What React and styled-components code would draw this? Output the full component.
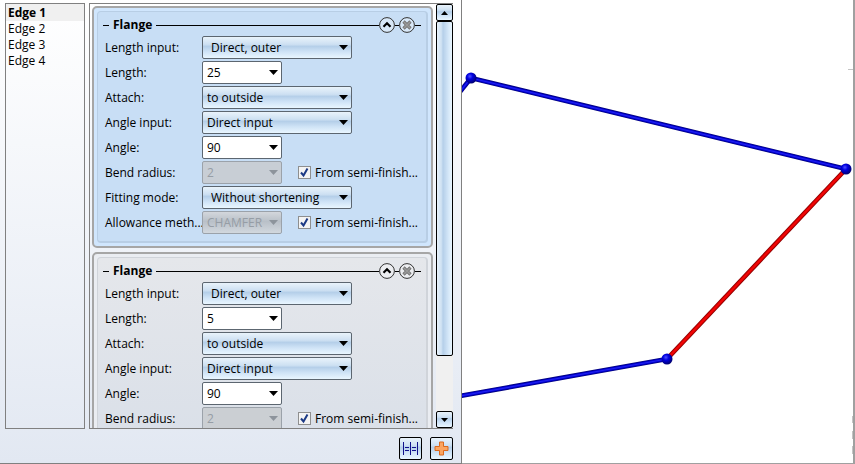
import React, { useId, useState } from "react";
import styled, { createGlobalStyle, css } from "styled-components";

const GlobalStyle = createGlobalStyle`
  * {
    box-sizing: border-box;
  }
  body {
    margin: 0;
    background: #fff;
    color: #000;
    overflow: hidden;
  }
  body, button, input, select {
    font-family: "Open Sans", "Noto Sans", sans-serif;
    font-size: 12px;
    line-height: 16px;
  }
`;

const Window = styled.div`
  display: flex;
  height: 100vh;
`;

const Sidebar = styled.aside`
  flex: 0 0 462px;
  display: flex;
  flex-direction: column;
  padding: 3px 8px 3px 5px;
  border-right: 1px solid #808080;
  border-bottom: 1px solid #808080;
  background: linear-gradient(#fff, #e2e8f2);
`;

const Columns = styled.div`
  flex: 1;
  min-height: 0;
  display: flex;
  gap: 4px;
`;

const EdgeList = styled.ul`
  width: 80px;
  margin: 0;
  padding: 0;
  list-style: none;
  border: 1px solid #808080;
`;

const EdgeButton = styled.button`
  display: block;
  width: 100%;
  padding: 0 2px;
  border: none;
  text-align: left;
  color: #000;
  background: ${({ $active }) => ($active ? "#f0f0f0" : "transparent")};
  font-weight: ${({ $active }) => ($active ? 700 : 400)};

  li:first-child & {
    padding-top: 1px;
  }
`;

const Scroller = styled.div`
  flex: 1;
  min-width: 0;
  display: flex;
  justify-content: space-between;
  border: 1px solid #808080;
  border-right: none;
`;

const Cards = styled.div`
  width: 343px;
  padding: 2px 0 0 2px;
  overflow: hidden;
  display: flex;
  flex-direction: column;
  gap: 4px;
`;

const Card = styled.section`
  flex: none;
  padding: 3px;
  border: 2px solid #a6a6a6;
  border-radius: 5px;
  background: ${({ $selected }) => ($selected ? "#d0e6fd" : "#eaedf2")};
`;

const CardBody = styled.div`
  padding: 4px 5px 6px;
  border: 1px solid ${({ $selected }) => ($selected ? "#b8cee5" : "#d0d4da")};
  border-right-width: 2px;
  border-bottom-width: 2px;
  border-radius: 4px;
  background: ${({ $selected }) =>
    $selected ? "#c8def5" : "linear-gradient(#e5e7eb, #d7dee8)"};
`;

const CardHeader = styled.header`
  display: flex;
  align-items: center;
  height: 18px;
  margin-bottom: 1px;
`;

const Rule = styled.span`
  height: 1px;
  background: #000;
  flex: ${({ $width }) => ($width ? `0 0 ${$width}px` : 1)};
`;

const Title = styled.h2`
  margin: 0 4px;
  font-size: 12px;
  line-height: 16px;
`;

const RoundButton = styled.button`
  width: 16px;
  height: 16px;
  padding: 0;
  display: flex;
  border: none;
  background: transparent;
`;

const Row = styled.div`
  display: flex;
  align-items: center;
  height: 25px;
  padding-left: 2px;
`;

const Label = styled.label`
  width: 97px;
  white-space: nowrap;
`;

const glass = css`
  background: linear-gradient(#e9f3fb, #cde0f2 35%, #b5cfe9 45%, #cfe3f6 70%, #e9f6ff);
`;

const SelectBox = styled.span`
  position: relative;
  display: block;
  width: ${({ $wide }) => ($wide ? 150 : 80)}px;
  height: 23px;
`;

const Select = styled.select`
  appearance: none;
  display: block;
  width: 100%;
  height: 100%;
  padding: 0 16px 0 ${({ $inset }) => ($inset ? 8 : 4)}px;
  border: 1px solid #5c6670;
  border-radius: 2px;
  color: #000;
  ${({ $plain }) => ($plain ? "background: #fff;" : glass)}

  &:disabled {
    opacity: 1;
    color: #969da5;
    border-color: #9ba2aa;
    background: ${({ $plain }) =>
      $plain
        ? "rgba(200, 203, 207, 0.85)"
        : "linear-gradient(#d3d7dc, #b9c0c8 45%, #d2d8de)"};
  }
`;

const Arrow = styled.svg`
  position: absolute;
  right: 4px;
  top: 9px;
  pointer-events: none;
  fill: ${({ $muted }) => ($muted ? "#8d949c" : "#000")};
`;

const CheckLabel = styled.label`
  display: flex;
  align-items: center;
  gap: 4px;
  margin-left: 16px;
  white-space: nowrap;
`;

const Checkbox = styled.input`
  appearance: none;
  width: 13px;
  height: 13px;
  margin: 0;
  border: 1px solid #8e8f8f;
  background: #f4f4f4;

  &:checked {
    background: #f4f4f4
      url("data:image/svg+xml,%3Csvg xmlns='http://www.w3.org/2000/svg' viewBox='0 0 11 11'%3E%3Cpath d='M2 5.5 4.5 8.5 8.5 1.5' fill='none' stroke='%231c3a85' stroke-width='2'/%3E%3C/svg%3E");
  }
`;

const Scrollbar = styled.div`
  width: 17px;
  display: flex;
  flex-direction: column;
  background: #f0f0f0;
`;

const ScrollButton = styled.button`
  height: 17px;
  padding: 0;
  display: grid;
  place-items: center;
  border: 1px solid #000;
  border-radius: 2px;
  ${glass}
`;

const Track = styled.div`
  flex: 1;
`;

const Thumb = styled.div`
  height: 86%;
  border: 1px solid #000;
  border-radius: 2px;
  background: linear-gradient(90deg, #e9f3fb, #cde0f2 30%, #b5cfe9 40%, #cfe3f6 70%, #e9f6ff);
`;

const Footer = styled.footer`
  display: flex;
  justify-content: flex-end;
  gap: 8px;
  padding-top: 8px;
`;

const ToolButton = styled.button`
  width: 23px;
  height: 23px;
  padding: 0;
  display: grid;
  place-items: center;
  border: 1px solid #000;
  border-radius: 2px;
  ${glass}
`;

const Viewport = styled.main`
  flex: 1;
  min-width: 0;
  overflow: hidden;
  border-right: 2px solid #a0a0a0;
  border-bottom: 1px solid #a0a0a0;
  background: #fff;
`;

const Scene = styled.svg`
  display: block;
`;

const edges = ["Edge 1", "Edge 2", "Edge 3", "Edge 4"];

const flanges = [
  { id: 1, length: "25", selected: true },
  { id: 2, length: "5", selected: false },
];

function Dropdown({ id, value, wide, plain, inset, disabled }) {
  return (
    <SelectBox $wide={wide}>
      <Select id={id} $plain={plain} $inset={inset} disabled={disabled}>
        <option>{value}</option>
      </Select>
      <Arrow width="9" height="5" viewBox="0 0 9 5" $muted={disabled}>
        <path d="M0 0h9L4.500 5z" />
      </Arrow>
    </SelectBox>
  );
}

function Field({ label, check, ...rest }) {
  const id = useId();
  return (
    <Row>
      <Label htmlFor={id}>{label}</Label>
      <Dropdown id={id} {...rest} />
      {check && (
        <CheckLabel>
          <Checkbox type="checkbox" defaultChecked />
          From semi-finish...
        </CheckLabel>
      )}
    </Row>
  );
}

function Flange({ length, selected }) {
  return (
    <Card $selected={selected}>
      <CardBody $selected={selected}>
        <CardHeader>
          <Rule $width={6} />
          <Title>Flange</Title>
          <Rule />
          <RoundButton aria-label="Collapse">
            <svg width="16" height="16" viewBox="0 0 16 16" fill="none">
              <circle cx="8" cy="8" r="7.400" fill="#fff" fillOpacity="0.3" stroke="#333" />
              <path d="M4.500 9.700 8 6.200l3.500 3.500" stroke="#000" strokeWidth="2.200" />
            </svg>
          </RoundButton>
          <Rule $width={4} />
          <RoundButton aria-label="Remove">
            <svg width="16" height="16" viewBox="0 0 16 16" fill="none">
              <circle cx="8" cy="8" r="7.400" fill="#fff" fillOpacity="0.3" stroke="#333" />
              <path d="M4.500 4.500l7 7M11.500 4.500l-7 7" stroke="#747474" strokeWidth="3.200" />
              <path d="M5 5l6 6M11 5l-6 6" stroke="#999" strokeWidth="1.600" />
            </svg>
          </RoundButton>
          <Rule $width={6} />
        </CardHeader>
        <Field label="Length input:" value="Direct, outer" wide inset />
        <Field label="Length:" value={length} plain />
        <Field label="Attach:" value="to outside" wide />
        <Field label="Angle input:" value="Direct input" wide />
        <Field label="Angle:" value="90" plain />
        <Field label="Bend radius:" value="2" plain disabled check />
        <Field label="Fitting mode:" value="Without shortening" wide inset />
        <Field label="Allowance meth..." value="CHAMFER" disabled check />
      </CardBody>
    </Card>
  );
}

function Rod({ from, to, red }) {
  const [x1, y1] = from;
  const [x2, y2] = to;
  const line = { x1, y1, x2, y2 };
  return (
    <g>
      <line {...line} stroke={red ? "#8a0000" : "#000080"} strokeWidth="4.600" />
      <line {...line} stroke={red ? "#e00000" : "#0000d0"} strokeWidth="3" />
      <line {...line} stroke={red ? "#f40808" : "#2020f0"} strokeWidth="1.200" />
    </g>
  );
}

function Model() {
  const nodes = [
    [9, 78],
    [384, 169],
    [205, 359],
  ];
  return (
    <Scene width="391" height="464" viewBox="0 0 391 464" role="img" aria-label="Sheet edges">
      <defs>
        <radialGradient id="ball" cx="0.4" cy="0.35" r="0.65">
          <stop offset="0" stopColor="#5050ff" />
          <stop offset="0.4" stopColor="#0000e0" />
          <stop offset="1" stopColor="#000070" />
        </radialGradient>
      </defs>
      <Rod from={[9, 78]} to={[-3, 93]} />
      <Rod from={[9, 78]} to={[384, 169]} />
      <Rod from={[-2, 396]} to={[205, 359]} />
      <Rod from={[205, 359]} to={[384, 169]} red />
      {nodes.map(([cx, cy]) => (
        <circle key={cx} cx={cx} cy={cy} r="5.500" fill="url(#ball)" />
      ))}
      {/* view frame ticks */}
      <path d="M386 69.500h5M390.500 416v7M390.500 431v8M390.500 446v8" stroke="#c4c4c4" />
    </Scene>
  );
}

export default function App() {
  const [active, setActive] = useState("Edge 1");
  return (
    <>
      <GlobalStyle />
      <Window>
        <Sidebar>
          <Columns>
            <EdgeList>
              {edges.map((edge) => (
                <li key={edge}>
                  <EdgeButton $active={edge === active} onClick={() => setActive(edge)}>
                    {edge}
                  </EdgeButton>
                </li>
              ))}
            </EdgeList>
            <Scroller>
              <Cards>
                {flanges.map((flange) => (
                  <Flange key={flange.id} {...flange} />
                ))}
              </Cards>
              <Scrollbar>
                <ScrollButton aria-label="Scroll up">
                  <svg width="7" height="4" viewBox="0 0 7 4">
                    <path d="M0 4h7L3.500 0z" />
                  </svg>
                </ScrollButton>
                <Track>
                  <Thumb />
                </Track>
                <ScrollButton aria-label="Scroll down">
                  <svg width="7" height="4" viewBox="0 0 7 4">
                    <path d="M0 0h7L3.500 4z" />
                  </svg>
                </ScrollButton>
              </Scrollbar>
            </Scroller>
          </Columns>
          <Footer>
            <ToolButton aria-label="Distribute">
              <svg width="17" height="15" viewBox="0 0 17 15" stroke="#10108c" fill="none">
                <path d="M1.500 1v13M8.500 1v13M15.500 1v13M3 6.500h4M3 9.500h4M10 6.500h4M10 9.500h4" />
              </svg>
            </ToolButton>
            <ToolButton aria-label="Add flange">
              <svg width="15" height="15" viewBox="0 0 15 15">
                <path
                  d="M5.500 1h4v4.500h4.500v4H9.500v4.500h-4V9.500H1v-4h4.500z"
                  fill="#fba45f"
                  stroke="#d9681d"
                  strokeLinejoin="round"
                />
              </svg>
            </ToolButton>
          </Footer>
        </Sidebar>
        <Viewport>
          <Model />
        </Viewport>
      </Window>
    </>
  );
}
